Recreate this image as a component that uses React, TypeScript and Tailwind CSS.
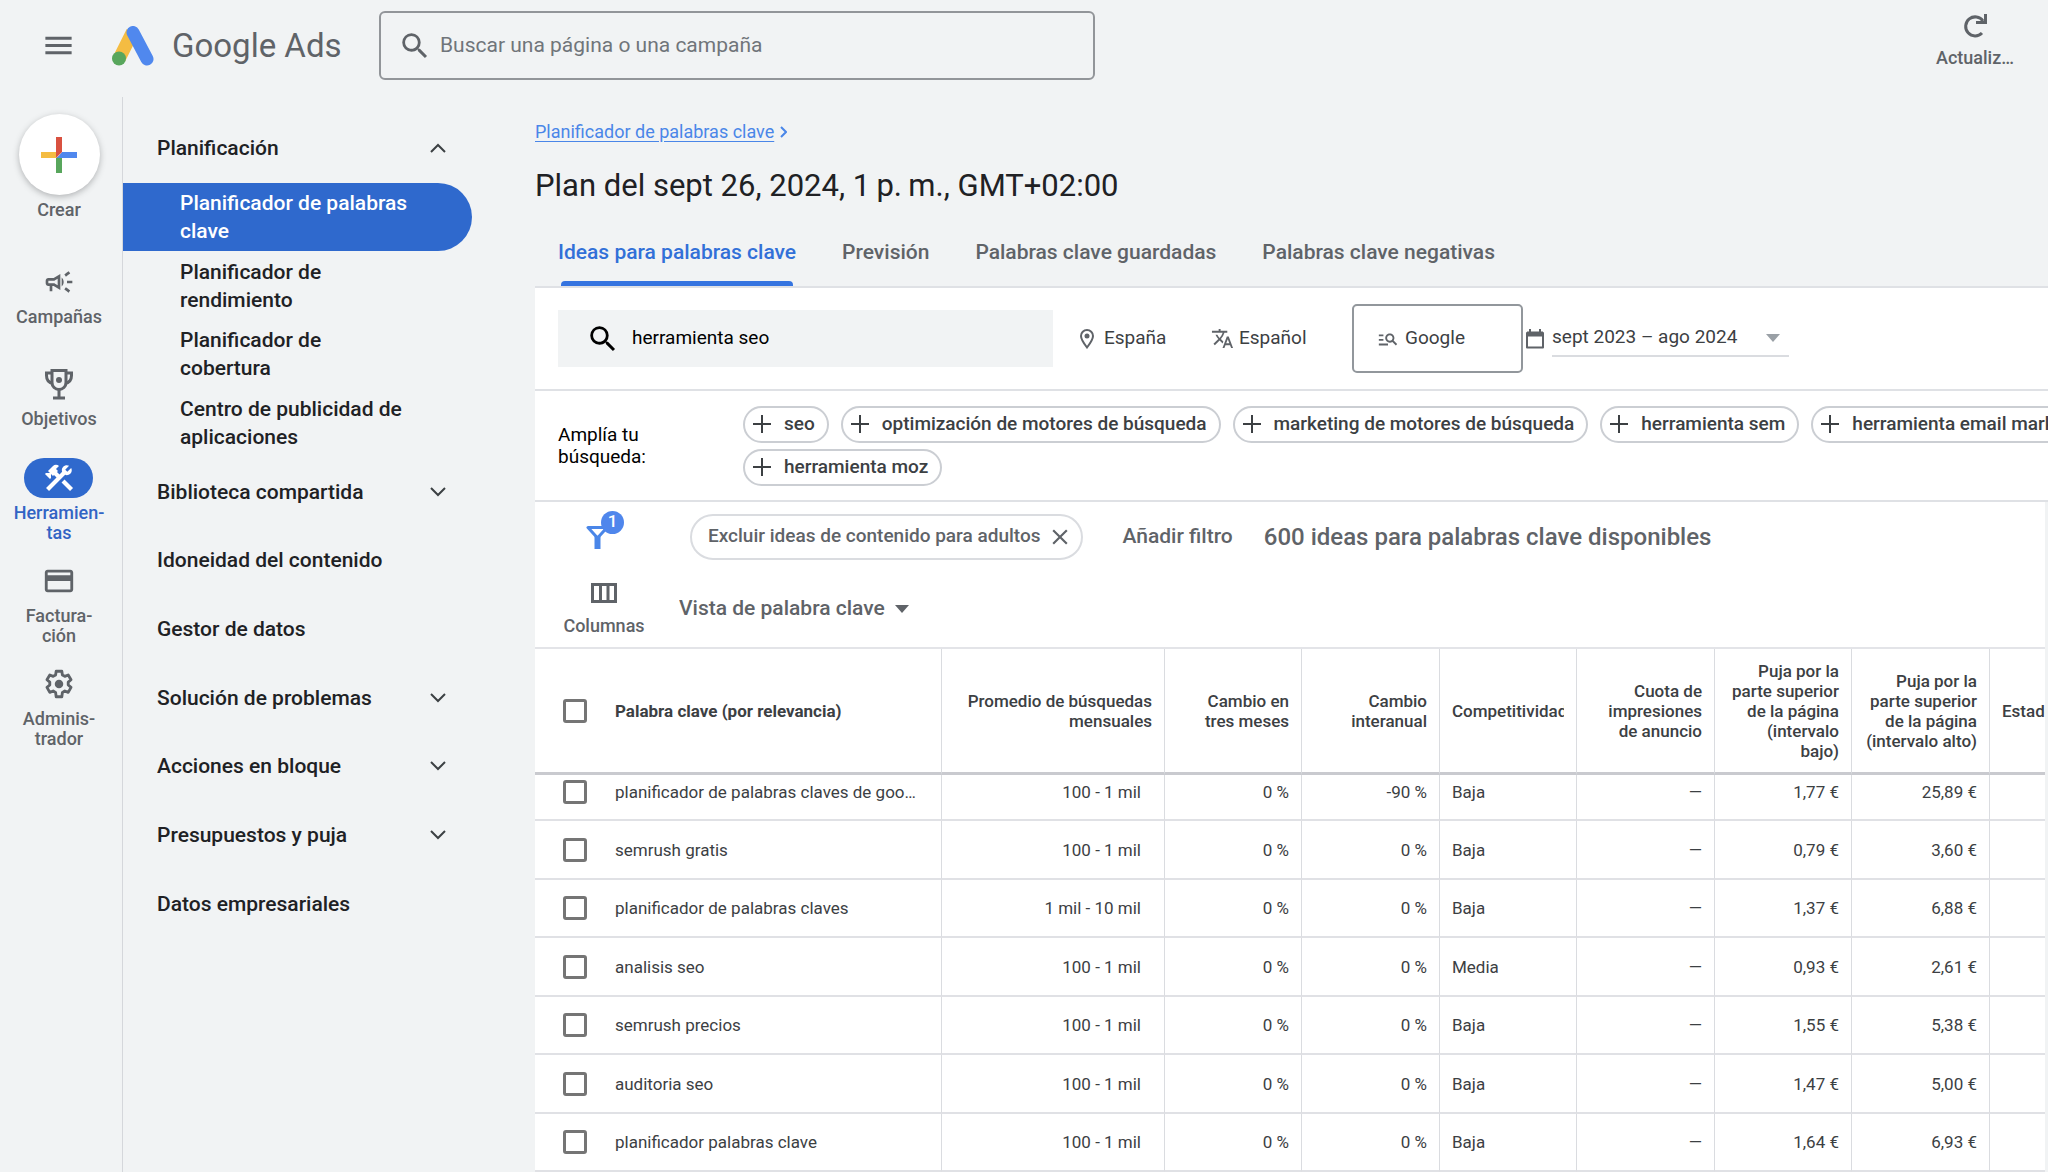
import { useState, type ReactNode } from "react";
import {
  MdClose,
  MdConstruction,
  MdCreditCard,
  MdManageSearch,
  MdMenu,
  MdOutlineCampaign,
  MdSearch,
  MdTranslate,
} from "react-icons/md";

type RailItem = {
  lines: string[];
  icon: ReactNode;
  height: string;
  active?: boolean;
};

const railItems: RailItem[] = [
  { lines: ["Campañas"], icon: <MdOutlineCampaign size={32} />, height: "h-[84px]" },
  { lines: ["Objetivos"], icon: <TrophyIcon />, height: "h-[76px]" },
  { lines: ["Herramien-", "tas"], icon: <MdConstruction size={34} />, height: "h-[85px]", active: true },
  { lines: ["Factura-", "ción"], icon: <MdCreditCard size={34} />, height: "h-[85px]" },
  { lines: ["Adminis-", "trador"], icon: <GearIcon />, height: "h-[85px]" },
];

const navItems: { label: string; sub?: boolean; active?: boolean; chevron?: "up" | "down" }[] = [
  { label: "Planificación", chevron: "up" },
  { label: "Planificador de palabras clave", sub: true, active: true },
  { label: "Planificador de rendimiento", sub: true },
  { label: "Planificador de cobertura", sub: true },
  { label: "Centro de publicidad de aplicaciones", sub: true },
  { label: "Biblioteca compartida", chevron: "down" },
  { label: "Idoneidad del contenido" },
  { label: "Gestor de datos" },
  { label: "Solución de problemas", chevron: "down" },
  { label: "Acciones en bloque", chevron: "down" },
  { label: "Presupuestos y puja", chevron: "down" },
  { label: "Datos empresariales" },
];

const tabs = [
  "Ideas para palabras clave",
  "Previsión",
  "Palabras clave guardadas",
  "Palabras clave negativas",
];

const suggestions = [
  ["seo", "optimización de motores de búsqueda", "marketing de motores de búsqueda", "herramienta sem", "herramienta email marketing"],
  ["herramienta moz"],
];

const rows = [
  { keyword: "planificador de palabras claves de google", volume: "100 - 1 mil", yoy: "-90 %", competition: "Baja", low: "1,77 €", high: "25,89 €" },
  { keyword: "semrush gratis", volume: "100 - 1 mil", yoy: "0 %", competition: "Baja", low: "0,79 €", high: "3,60 €" },
  { keyword: "planificador de palabras claves", volume: "1 mil - 10 mil", yoy: "0 %", competition: "Baja", low: "1,37 €", high: "6,88 €" },
  { keyword: "analisis seo", volume: "100 - 1 mil", yoy: "0 %", competition: "Media", low: "0,93 €", high: "2,61 €" },
  { keyword: "semrush precios", volume: "100 - 1 mil", yoy: "0 %", competition: "Baja", low: "1,55 €", high: "5,38 €" },
  { keyword: "auditoria seo", volume: "100 - 1 mil", yoy: "0 %", competition: "Baja", low: "1,47 €", high: "5,00 €" },
  { keyword: "planificador palabras clave", volume: "100 - 1 mil", yoy: "0 %", competition: "Baja", low: "1,64 €", high: "6,93 €" },
];

function AdsLogo() {
  return (
    <svg width="42" height="40" viewBox="0 0 42 40" aria-hidden="true">
      <path d="M7 33 20.500 6" stroke="#f4bc42" strokeWidth="13" />
      <path d="M21 6.500 35 33" stroke="#5088ee" strokeWidth="13" strokeLinecap="round" />
      <circle cx="7" cy="32.500" r="7" fill="#58a65c" />
    </svg>
  );
}

function CreatePlusIcon() {
  return (
    <svg width="36" height="36" viewBox="0 0 36 36" aria-hidden="true">
      <path d="M0 15h15v6H0z" fill="#f4bc42" />
      <path d="M15 21l6-4v19h-6z" fill="#58a65c" />
      <path d="M21 15h15v6H16z" fill="#5088ee" />
      <path d="M15 0h6v15l-6 6z" fill="#d95140" />
    </svg>
  );
}

function TrophyIcon() {
  return (
    <svg width="30" height="32" viewBox="0 0 30 32" fill="none" stroke="currentColor" strokeWidth="3" aria-hidden="true">
      <path d="M8 2.500h14v12a7 7 0 0 1-14 0z" />
      <path d="M8 5H2.500v2.500c0 4 2.500 7 6 8M22 5h5.500v2.500c0 4-2.500 7-6 8" />
      <path d="M15 22v7M9 30h12" />
      <circle cx="15" cy="12" r="3" fill="currentColor" stroke="none" />
    </svg>
  );
}

function GearIcon() {
  return (
    <svg width="34" height="34" viewBox="0 0 24 24" aria-hidden="true">
      <path
        d="m10 3-.4 2.600-1.700 1L5.500 5.600l-2 3.400 2 1.700v2l-2 1.700 2 3.500 2.400-1 1.700 1L10 21h4l.4-3.100 1.700-1 2.400 1 2-3.500-2-1.700v-2l2-1.700-2-3.400-2.400 1-1.700-1L14 3z"
        fill="none"
        stroke="currentColor"
        strokeWidth="2"
        strokeLinejoin="round"
      />
      <circle cx="12" cy="12" r="3" fill="currentColor" />
    </svg>
  );
}

function RefreshIcon() {
  return (
    <svg width="24" height="24" viewBox="0 0 24 24" fill="none" stroke="currentColor" strokeWidth="3" aria-hidden="true">
      <path d="M19 19A9.500 9.500 0 1 1 20 7" />
      <path d="M22.500 0v8.500H13" />
    </svg>
  );
}

function FunnelIcon() {
  return (
    <svg width="24" height="24" viewBox="0 0 24 24" fill="none" stroke="currentColor" strokeLinejoin="round" aria-hidden="true">
      <path d="M2 2.500h19l-9.500 10.500z" strokeWidth="3" />
      <path d="M11.500 11.500V24" strokeWidth="6" />
    </svg>
  );
}

function PinIcon() {
  return (
    <svg width="14" height="20" viewBox="0 0 14 20" fill="none" stroke="currentColor" strokeWidth="2" aria-hidden="true">
      <path d="M7 18.500C3.500 14 1 10.500 1 7a6 6 0 0 1 12 0c0 3.500-2.500 7-6 11.500z" />
      <circle cx="7" cy="7" r="2.500" fill="currentColor" stroke="none" />
    </svg>
  );
}

function CalendarIcon() {
  return (
    <svg width="18" height="20" viewBox="0 0 18 20" aria-hidden="true">
      <path d="M1 4h16v14.500H1z" fill="none" stroke="currentColor" strokeWidth="2" strokeLinejoin="round" />
      <path d="M1 2.500h16v5H1zM3 0h2v4H3zM13 0h2v4h-2z" fill="currentColor" />
    </svg>
  );
}

function ColumnsIcon() {
  return (
    <svg width="26" height="20" viewBox="0 0 26 20" fill="none" stroke="currentColor" strokeWidth="3" aria-hidden="true">
      <path d="M1.500 1.500h23v17h-23zM9.500 1.500v17M17 1.500v17" />
    </svg>
  );
}

function PlusIcon() {
  return (
    <svg width="18" height="18" viewBox="0 0 18 18" fill="none" stroke="currentColor" strokeWidth="2" aria-hidden="true">
      <path d="M9 0v18M0 9h18" />
    </svg>
  );
}

function Chevron({ up }: { up?: boolean }) {
  return (
    <svg width="16" height="10" viewBox="0 0 16 10" fill="none" stroke="#3c4043" strokeWidth="2" aria-hidden="true">
      <path d={up ? "m1 9 7-7 7 7" : "m1 1 7 7 7-7"} />
    </svg>
  );
}

function Triangle() {
  return (
    <svg width="14" height="8" viewBox="0 0 14 8" fill="currentColor" aria-hidden="true">
      <path d="M0 0h14L7 8z" />
    </svg>
  );
}

function Checkbox({ label }: { label: string }) {
  return (
    <input
      type="checkbox"
      aria-label={label}
      className="block size-6 shrink-0 appearance-none rounded-[3px] border-[3px] border-[#757575] bg-white checked:bg-[#3574e0]"
    />
  );
}

function TopBar() {
  return (
    <header className="flex h-[97px] shrink-0 items-start pr-[34px]">
      <div className="flex h-[91px] flex-1 items-center">
        <button type="button" aria-label="Menú" className="ml-[41px] text-[#5f6368]">
          <MdMenu size={35} />
        </button>
        <a href="#inicio" className="ml-[36px] flex w-[267px] items-center gap-[18px]">
          <AdsLogo />
          <span className="text-[33px] leading-[40px] whitespace-nowrap text-[#5f6368]">Google Ads</span>
        </a>
        <label className="flex h-[69px] w-[716px] items-center gap-2 rounded-[6px] border-2 border-[#929599] pl-[17px] text-[#5f6368]">
          <MdSearch size={34} />
          <input
            type="search"
            aria-label="Buscar una página o una campaña"
            placeholder="Buscar una página o una campaña"
            className="flex-1 bg-transparent text-[21px] outline-none placeholder:text-[#70757a]"
          />
        </label>
      </div>
      <button type="button" className="mt-[14px] flex flex-col items-center gap-[10px] text-[18px] leading-[20px] font-medium text-[#5f6368]">
        <RefreshIcon />
        Actualiz…
      </button>
    </header>
  );
}

function Rail() {
  return (
    <nav aria-label="Principal" className="flex w-[123px] shrink-0 flex-col items-center border-r border-[#d5d7db] pt-[17px] pr-[4px] text-[18px] leading-[20px] font-medium text-[#5f6368]">
      <button type="button" className="flex flex-col items-center gap-[5px]">
        <span className="flex size-[81px] items-center justify-center rounded-full bg-white shadow-[0_2px_6px_rgba(60,64,67,0.35)]">
          <CreatePlusIcon />
        </span>
        Crear
      </button>
      <div className="mt-[42px] flex flex-col gap-[18px]">
        {railItems.map((item) => (
          <a
            key={item.lines[0]}
            href="#seccion"
            className={`flex flex-col items-center gap-[5px] text-center ${item.height} ${item.active ? "text-[#3264c4]" : ""}`}
          >
            <span
              className={`flex h-10 w-[69px] items-center justify-center rounded-full ${item.active ? "bg-[#2f69cd] text-white" : ""}`}
            >
              {item.icon}
            </span>
            <span>
              {item.lines.map((line) => (
                <span key={line} className="block">
                  {line}
                </span>
              ))}
            </span>
          </a>
        ))}
      </div>
    </nav>
  );
}

function SideNav() {
  return (
    <nav aria-label="Herramientas" className="flex w-[412px] shrink-0 flex-col pt-[17px] pr-[63px] text-[21px] leading-[28px] font-medium text-[#202124]">
      <div className="flex h-[824px] flex-col">
        {navItems.map((item) => (
          <a
            key={item.label}
            href="#seccion"
            className={`flex flex-1 items-center justify-between pr-[26px] ${item.sub ? "pl-[57px]" : "pl-[34px]"} ${
              item.active ? "rounded-r-full bg-[#2f69cd] text-white" : ""
            }`}
          >
            <span className={item.sub ? "max-w-[232px]" : ""}>{item.label}</span>
            {item.chevron && <Chevron up={item.chevron === "up"} />}
          </a>
        ))}
      </div>
    </nav>
  );
}

function SearchRow() {
  const [query, setQuery] = useState("herramienta seo");

  return (
    <div className="flex h-[103px] items-center border-b-2 border-[#dfe1e5] pl-[23px] text-[19px] text-[#3c4043]">
      <label className="flex h-[57px] w-[495px] items-center gap-3 bg-[#f1f3f4] pl-[28px] text-black">
        <MdSearch size={34} />
        <input
          aria-label="Palabras clave"
          value={query}
          onChange={(e) => setQuery(e.target.value)}
          className="min-w-0 flex-1 bg-transparent outline-none"
        />
      </label>
      <button type="button" className="ml-[27px] flex w-[131px] items-center gap-[10px]">
        <span className="text-[#5f6368]">
          <PinIcon />
        </span>
        España
      </button>
      <button type="button" className="flex w-[141px] items-center gap-[5px]">
        <MdTranslate size={23} className="text-[#5f6368]" />
        Español
      </button>
      <button type="button" className="flex h-[69px] w-[171px] items-center gap-[6px] rounded-[5px] border-2 border-[#92979c] pl-[23px]">
        <MdManageSearch size={22} className="text-[#5f6368]" />
        Google
      </button>
      <label className="flex items-center gap-[8px] pl-[3px]">
        <span className="text-[#5f6368]">
          <CalendarIcon />
        </span>
        <span className="flex h-[36px] items-center border-b-2 border-[#dadce0] pr-[9px]">
          <select aria-label="Periodo" className="w-[214px] appearance-none bg-transparent outline-none">
            <option>sept 2023 – ago 2024</option>
          </select>
          <span className="text-[#9aa0a6]">
            <Triangle />
          </span>
        </span>
      </label>
    </div>
  );
}

function Suggestions() {
  return (
    <div className="flex h-[111px] items-center border-b-2 border-[#dfe1e5] pl-[23px]">
      <p className="w-[185px] shrink-0 pr-[60px] text-[19px] leading-[22px] text-black">Amplía tu búsqueda:</p>
      <div className="flex flex-col gap-[6px]">
        {suggestions.map((line) => (
          <div key={line[0]} className="flex gap-[12px]">
            {line.map((term) => (
              <button
                key={term}
                type="button"
                className="flex h-[37px] shrink-0 items-center gap-[13px] rounded-full border-2 border-[#cbced3] pr-[12px] pl-[8px] text-[19px] font-medium text-[#3c4043]"
              >
                <PlusIcon />
                {term}
              </button>
            ))}
          </div>
        ))}
      </div>
    </div>
  );
}

function Toolbar() {
  return (
    <div className="text-[21px] font-medium text-[#5f6368]">
      <div className="flex h-[69px] items-center">
        <button type="button" aria-label="Filtros" className="relative ml-[51px] text-[#4a86e8]">
          <FunnelIcon />
          <span className="absolute -top-[14px] left-[15px] flex size-[23px] items-center justify-center rounded-full bg-[#4f86ec] text-[17px] font-medium text-white">
            1
          </span>
        </button>
        <button type="button" className="ml-[80px] flex h-[46px] items-center gap-[7px] rounded-full border-2 border-[#dadce0] pr-[8px] pl-[16px] text-[19px]">
          Excluir ideas de contenido para adultos
          <MdClose size={26} />
        </button>
        <button type="button" className="ml-[39px]">Añadir filtro</button>
        <p className="ml-[31px] text-[24px]">600 ideas para palabras clave disponibles</p>
      </div>
      <div className="flex h-[76px] items-center pl-[28px]">
        <button type="button" className="flex w-[82px] flex-col items-center gap-[13px] text-[18px] leading-[20px]">
          <ColumnsIcon />
          Columnas
        </button>
        <label className="ml-[34px] flex items-center gap-[10px]">
          <select aria-label="Vista" className="appearance-none bg-transparent outline-none">
            <option>Vista de palabra clave</option>
          </select>
          <Triangle />
        </label>
      </div>
    </div>
  );
}

const th = "border-r border-b-[3px] border-r-[#dadce0] border-b-[#c9cacf] px-[12px]";
const td = "overflow-hidden border-r border-b-2 border-r-[#dadce0] border-b-[#e0e1e5] px-[12px] whitespace-nowrap";

function KeywordTable() {
  return (
    <table className="w-[1596px] table-fixed border-separate border-spacing-0 border-t-2 border-[#e3e4e8] text-[17px] leading-[20px] text-[#3c4043]">
      <colgroup>
        <col className="w-[80px]" />
        <col className="w-[327px]" />
        <col className="w-[223px]" />
        <col className="w-[137px]" />
        <col className="w-[138px]" />
        <col className="w-[137px]" />
        <col className="w-[138px]" />
        <col className="w-[137px]" />
        <col className="w-[138px]" />
        <col className="w-[141px]" />
      </colgroup>
      <thead>
        <tr className="h-[126px] text-right font-medium *:font-medium">
          <th className="border-b-[3px] border-[#c9cacf] pl-[28px]">
            <Checkbox label="Seleccionar todo" />
          </th>
          <th className={`${th} pl-0 text-left`}>
            <span className="font-bold">Palabra clave (por relevancia)</span>
          </th>
          <th className={th}>Promedio de búsquedas mensuales</th>
          <th className={`${th} pl-[30px]`}>Cambio en tres meses</th>
          <th className={th}>Cambio interanual</th>
          <th className={`${th} text-left`}>
            <div className="overflow-hidden">Competitividad</div>
          </th>
          <th className={th}>Cuota de impresiones de anuncio</th>
          <th className={th}>Puja por la parte superior de la página (intervalo bajo)</th>
          <th className={`${th} pl-[8px]`}>Puja por la parte superior de la página (intervalo alto)</th>
          <th className={`${th} text-left`}>Estado</th>
        </tr>
      </thead>
      <tbody>
        {rows.map((row) => (
          <tr key={row.keyword} className="text-right first:h-[46px] first:*:pb-[11px] even:h-[59px] not-first:odd:h-[58px]">
            <td className="border-b-2 border-[#e0e1e5] pl-[28px]">
              <Checkbox label={row.keyword} />
            </td>
            <td className={`${td} pl-0 text-left`}>
              <div className="truncate pr-[8px]">{row.keyword}</div>
            </td>
            <td className={`${td} pr-[23px]`}>{row.volume}</td>
            <td className={td}>0 %</td>
            <td className={td}>{row.yoy}</td>
            <td className={`${td} text-left`}>{row.competition}</td>
            <td className={td}>—</td>
            <td className={td}>{row.low}</td>
            <td className={td}>{row.high}</td>
            <td className={td} />
          </tr>
        ))}
      </tbody>
    </table>
  );
}

export default function App() {
  const [tab, setTab] = useState(tabs[0]);

  return (
    <div className="flex h-screen flex-col overflow-hidden bg-[#f1f3f4] font-['Roboto',sans-serif]">
      <TopBar />
      <div className="flex min-h-0 flex-1">
        <Rail />
        <SideNav />
        <main className="min-w-0 flex-1 overflow-hidden">
          <div className="flex h-[191px] flex-col border-b-2 border-[#dfe1e5]">
            <a href="#planificador" className="mt-[24px] flex items-center gap-[6px] text-[18px] leading-[22px] text-[#4a86e8]">
              <span className="underline underline-offset-[3px]">Planificador de palabras clave</span>
              <svg width="7" height="12" viewBox="0 0 7 12" fill="none" stroke="currentColor" strokeWidth="2" aria-hidden="true">
                <path d="m1 1 5 5-5 5" />
              </svg>
            </a>
            <h1 className="mt-[23px] text-[31px] leading-[40px] text-[#202124]">{"Plan del sept 26, 2024, 1\u2009p.\u2009m., GMT+02:00"}</h1>
            <div role="tablist" className="mt-auto flex gap-[46px] pl-[23px] text-[21px] font-medium text-[#5f6368]">
              {tabs.map((name) => (
                <button
                  key={name}
                  type="button"
                  role="tab"
                  aria-selected={name === tab}
                  onClick={() => setTab(name)}
                  className={`relative h-[67px] whitespace-nowrap ${name === tab ? "text-[#3270d8]" : ""}`}
                >
                  {name}
                  {name === tab && <span className="absolute inset-x-[3px] bottom-0 h-[5px] rounded-t-[4px] bg-[#3574e0]" />}
                </button>
              ))}
            </div>
          </div>
          <div className="bg-white">
            <SearchRow />
            <Suggestions />
          </div>
          <div className="mr-[3px] overflow-hidden bg-white">
            <Toolbar />
            <KeywordTable />
          </div>
        </main>
      </div>
    </div>
  );
}
